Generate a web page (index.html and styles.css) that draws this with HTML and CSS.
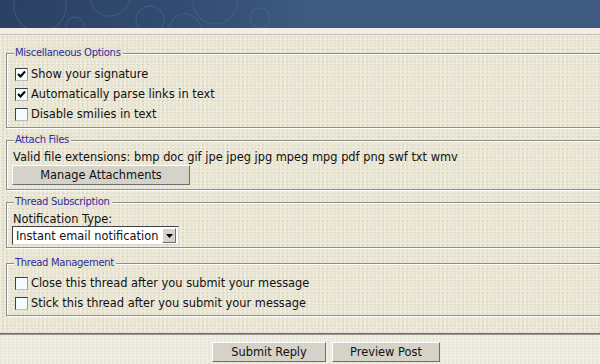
FILE: index.html
```html
<!DOCTYPE html>
<html>
<head>
<meta charset="utf-8">
<link rel="stylesheet" href="styles.css">
</head>
<body>
<div class="page">
  <div class="header">
    <svg class="header-art" width="600" height="28" viewBox="0 0 600 28">
      <g fill="none" stroke="#56739b" stroke-opacity="0.35" stroke-width="1.3">
        <circle cx="40" cy="6" r="26"/>
        <circle cx="110" cy="-4" r="20"/>
        <circle cx="150" cy="20" r="14"/>
        <circle cx="215" cy="2" r="22"/>
        <circle cx="260" cy="18" r="10"/>
        <circle cx="75" cy="26" r="9"/>
        <circle cx="185" cy="30" r="16"/>
      </g>
    </svg>
  </div>
  <div class="strip"></div>
  <div class="panel">
    <fieldset class="box box-misc">
      <legend class="box-title">Miscellaneous Options</legend>
      <label class="check-row"><span class="cb"><svg class="tick" viewBox="0 0 9 9"><path d="M1 4 L3.5 6.5 L8 1.5" fill="none" stroke="#000" stroke-width="2"/></svg></span>Show your signature</label>
      <label class="check-row"><span class="cb"><svg class="tick" viewBox="0 0 9 9"><path d="M1 4 L3.5 6.5 L8 1.5" fill="none" stroke="#000" stroke-width="2"/></svg></span>Automatically parse links in text</label>
      <label class="check-row"><span class="cb"></span>Disable smilies in text</label>
    </fieldset>
    <fieldset class="box box-attach">
      <legend class="box-title">Attach Files</legend>
      <div class="line line-ext">Valid file extensions: bmp doc gif jpe jpeg jpg mpeg mpg pdf png swf txt wmv</div>
      <button class="btn btn-manage">Manage Attachments</button>
    </fieldset>
    <fieldset class="box box-sub">
      <legend class="box-title">Thread Subscription</legend>
      <div class="line line-notify">Notification Type:</div>
      <div class="select"><span class="select-text">Instant email notification</span><span class="select-arrow"><svg width="7" height="4" viewBox="0 0 7 4"><path d="M0 0 H7 L3.5 4 Z" fill="#000"/></svg></span></div>
    </fieldset>
    <fieldset class="box box-manage">
      <legend class="box-title">Thread Management</legend>
      <label class="check-row"><span class="cb"></span>Close this thread after you submit your message</label>
      <label class="check-row"><span class="cb"></span>Stick this thread after you submit your message</label>
    </fieldset>
  </div>
  <div class="footer">
    <button class="btn btn-submit">Submit Reply</button>
    <button class="btn btn-preview">Preview Post</button>
  </div>
</div>
</body>
</html>
```

FILE: styles.css
```css
html, body {
  margin: 0;
  padding: 0;
  overflow: hidden;
  width: 600px;
  height: 364px;
}
body {
  font-family: "DejaVu Sans", Verdana, sans-serif;
  font-size: 11.4px;
  color: #111;
}
.page {
  width: 660px;
}
.header {
  height: 28px;
  background: linear-gradient(90deg, #2b4163 0%, #324c72 28%, #3f5b81 48%, #3f5b81 100%);
  overflow: hidden;
}
.header-art {
  display: block;
}
.strip {
  height: 6px;
  background: #f2eee6;
  border-bottom: 1px solid #c6c2ba;
  box-shadow: 0 1px 0 #f6f3ec;
}
.panel {
  background-color: #e8e4cd;
  background-image: radial-gradient(circle at 1px 1px, rgba(255,255,255,0.55) 0.6px, transparent 1px),
                    radial-gradient(circle at 3px 2px, rgba(190,180,220,0.35) 0.6px, transparent 1px);
  background-size: 4px 3px, 5px 4px;
  padding: 12px 0 17px 6px;
  border-bottom: 1px solid #6b6b68;
}
.box {
  width: 640px;
  margin: 0;
  padding: 5px 4px 3px 5px;
  border: 1px solid #8d8d8a;
  box-shadow: 1px 1px 0 #fff, inset 1px 1px 0 #fff;
  box-sizing: border-box;
}
.box-attach {
  margin-top: 6px;
  padding-top: 4px;
  padding-bottom: 4px;
}
.box-sub {
  margin-top: 6px;
  padding-top: 5px;
  padding-bottom: 2px;
}
.box-manage {
  margin-top: 9px;
  padding-top: 4px;
  padding-bottom: 2px;
}
.box-title {
  font-family: "DejaVu Sans", sans-serif;
  font-size: 10px;
  letter-spacing: -0.3px;
  line-height: 12px;
  color: #2b2ba6;
  padding: 0 2px 0 1px;
  margin-left: 2px;
  background: #e8e4cd;
}
.check-row {
  display: flex;
  align-items: center;
  height: 20px;
  gap: 3px;
  padding-left: 3px;
}
.cb {
  width: 11px;
  height: 11px;
  border: 1px solid;
  border-color: #404040 #9a9a9a #bdbdbd #404040;
  background: #f4fbfd;
  display: flex;
  align-items: center;
  justify-content: center;
}
.tick {
  width: 9px;
  height: 9px;
}
.line {
  height: 15px;
  line-height: 15px;
  padding-left: 1px;
}
.line-notify {
  height: 13px;
  line-height: 13px;
}
.btn {
  font-family: "DejaVu Sans", sans-serif;
  font-size: 11.4px;
  color: #111;
  background: #d5d2ca;
  border: 1px solid;
  border-color: #ffffff #6e6e6e #6e6e6e #ffffff;
  height: 20px;
  padding: 0;
  margin: 0;
  display: block;
}
.btn-manage {
  width: 178px;
}
.select {
  display: flex;
  align-items: center;
  width: 167px;
  height: 19px;
  box-sizing: border-box;
  border: 1px solid;
  border-color: #404040 #d8d5ce #d8d5ce #404040;
  background: #fff;
}
.select-text {
  flex: 1;
  padding-left: 3px;
  white-space: nowrap;
  overflow: hidden;
}
.select-arrow {
  width: 12px;
  height: 13px;
  margin-right: 2px;
  background: #d5d2ca;
  border: 1px solid;
  border-color: #fff #6e6e6e #6e6e6e #fff;
  display: flex;
  align-items: center;
  justify-content: center;
}
.footer {
  background-color: #f1ede3;
  background-image: radial-gradient(circle at 1px 1px, rgba(200,220,200,0.5) 0.6px, transparent 1px);
  background-size: 4px 3px;
  height: 40px;
  border-top: 1px solid #9a9893;
  display: flex;
  gap: 6px;
  padding: 7px 0 0 212px;
  box-sizing: border-box;
}
.btn-submit {
  width: 114px;
}
.btn-preview {
  width: 108px;
}
```
